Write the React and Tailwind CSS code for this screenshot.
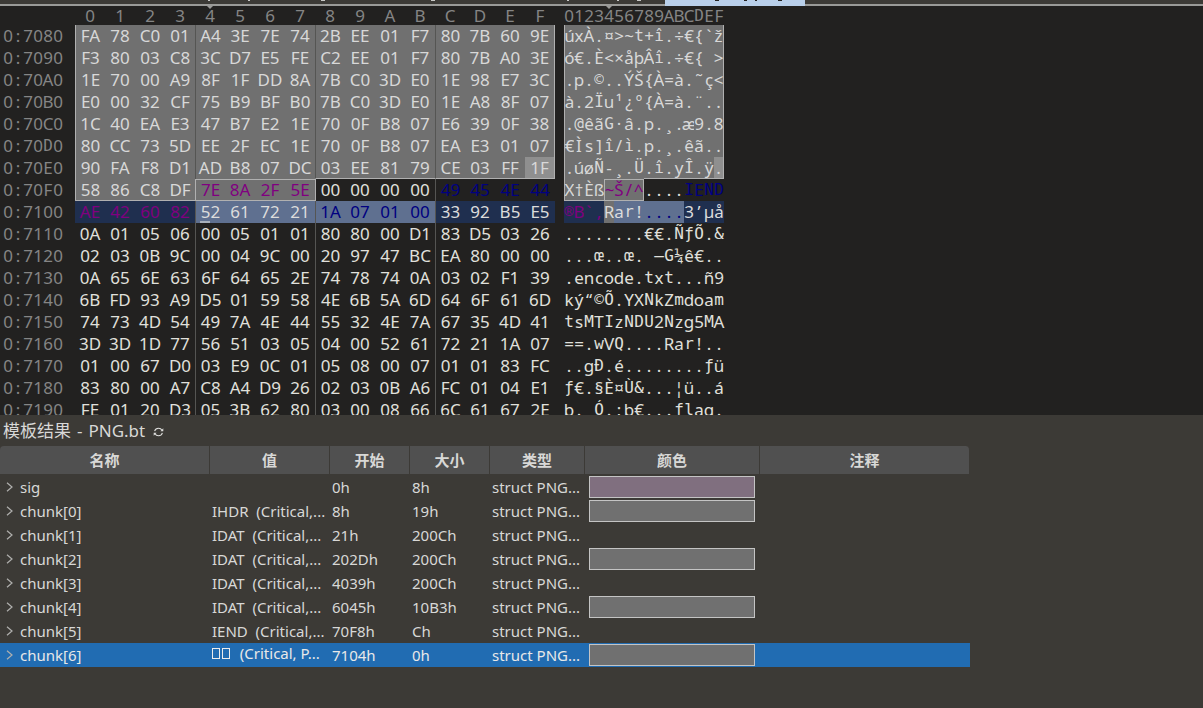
import React from "react";

const ROWS = [
  ["0:7080", "FA 78 C0 01 A4 3E 7E 74 2B EE 01 F7 80 7B 60 9E", "úxÀ.¤>~t+î.÷€{`ž"],
  ["0:7090", "F3 80 03 C8 3C D7 E5 FE C2 EE 01 F7 80 7B A0 3E", "ó€.È<×åþÂî.÷€{ >"],
  ["0:70A0", "1E 70 00 A9 8F 1F DD 8A 7B C0 3D E0 1E 98 E7 3C", ".p.©..ÝŠ{À=à.˜ç<"],
  ["0:70B0", "E0 00 32 CF 75 B9 BF B0 7B C0 3D E0 1E A8 8F 07", "à.2Ïu¹¿º{À=à.¨.."],
  ["0:70C0", "1C 40 EA E3 47 B7 E2 1E 70 0F B8 07 E6 39 0F 38", ".@êãG·â.p.¸.æ9.8"],
  ["0:70D0", "80 CC 73 5D EE 2F EC 1E 70 0F B8 07 EA E3 01 07", "€Ìs]î/ì.p.¸.êã.."],
  ["0:70E0", "90 FA F8 D1 AD B8 07 DC 03 EE 81 79 CE 03 FF 1F", ".úøÑ-¸.Ü.î.yÎ.ÿ."],
  ["0:70F0", "58 86 C8 DF 7E 8A 2F 5E 00 00 00 00 49 45 4E 44", "X†Èß~Š/^....IEND"],
  ["0:7100", "AE 42 60 82 52 61 72 21 1A 07 01 00 33 92 B5 E5", "®B`‚Rar!....3’µå"],
  ["0:7110", "0A 01 05 06 00 05 01 01 80 80 00 D1 83 D5 03 26", "........€€.ÑƒÕ.&"],
  ["0:7120", "02 03 0B 9C 00 04 9C 00 20 97 47 BC EA 80 00 00", "...œ..œ. —G¼ê€.."],
  ["0:7130", "0A 65 6E 63 6F 64 65 2E 74 78 74 0A 03 02 F1 39", ".encode.txt...ñ9"],
  ["0:7140", "6B FD 93 A9 D5 01 59 58 4E 6B 5A 6D 64 6F 61 6D", "ký“©Õ.YXNkZmdoam"],
  ["0:7150", "74 73 4D 54 49 7A 4E 44 55 32 4E 7A 67 35 4D 41", "tsMTIzNDU2Nzg5MA"],
  ["0:7160", "3D 3D 1D 77 56 51 03 05 04 00 52 61 72 21 1A 07", "==.wVQ....Rar!.."],
  ["0:7170", "01 00 67 D0 03 E9 0C 01 05 08 00 07 01 01 83 FC", "..gÐ.é........ƒü"],
  ["0:7180", "83 80 00 A7 C8 A4 D9 26 02 03 0B A6 FC 01 04 E1", "ƒ€.§È¤Ù&...¦ü..á"],
  ["0:7190", "FE 01 20 D3 05 3B 62 80 03 00 08 66 6C 61 67 2E", "þ. Ó.;b€...flag."],
];

const CHUNKS = [
  ["sig", "", "0h", "8h", "bg-[#806f7f]"],
  ["chunk[0]", "IHDR  (Critical,...", "8h", "19h", "bg-[#707070]"],
  ["chunk[1]", "IDAT  (Critical,...", "21h", "200Ch", null],
  ["chunk[2]", "IDAT  (Critical,...", "202Dh", "200Ch", "bg-[#707070]"],
  ["chunk[3]", "IDAT  (Critical,...", "4039h", "200Ch", null],
  ["chunk[4]", "IDAT  (Critical,...", "6045h", "10B3h", "bg-[#707070]"],
  ["chunk[5]", "IEND  (Critical,...", "70F8h", "Ch", null],
  ["chunk[6]", null, "7104h", "0h", "bg-[#707070]"],
];

const SANS = "font-['Noto_Sans','Noto_Sans_CJK_SC',sans-serif]";
const MONO = "font-['DejaVu_Sans_Mono',monospace] text-[16px]";
const MONO_GLYPHS = /[IMWilmwfrtjîÎìÏœ—¼@©®ƒNDUQGÑÕÓÐÙÜ&]/;

function Cells({ text, className = "", tone }) {
  return (
    <span className={`flex ${className}`}>
      {[...text].map((c, i) => (
        <span
          key={i}
          className={`flex w-[10px] justify-center whitespace-pre ${MONO_GLYPHS.test(c) ? MONO : ""} ${tone ? tone(i) : ""}`}
        >
          {c}
        </span>
      ))}
    </span>
  );
}

function textTone(row, i) {
  if (row < 7) return "text-[#d8d8d8]";
  if (row === 7) {
    if (i < 4) return "text-[#d8d8d8]";
    if (i < 8) return "text-[#800080]";
    return i < 12 ? "text-[#e0e0dc]" : "text-[#000080]";
  }
  if (row === 8) {
    if (i < 4) return "text-[#800080]";
    return i >= 8 && i < 12 ? "text-[#000080]" : "text-[#dcdcdc]";
  }
  return "text-[#e0e0dc]";
}

function fill(row, i, ascii) {
  if (row < 7) return row === 6 && i === 15 ? "bg-[#8f8f8f]" : "bg-[#707070]";
  if (row === 7) return i < 8 ? "bg-[#707070]" : "";
  if (row === 8) {
    if (i < 4 || i >= 12) return "bg-[#1f2f4f]";
    return ascii && i === 4 ? "bg-[#707070]" : "bg-[#5f7090]";
  }
  return "";
}

function edge(row, i, ascii) {
  const e = [];
  const line = "border-[#b0b0b0]";
  const divider = !ascii && (i === 4 || i === 8 || i === 12);
  if (row < 8 && i === 0) e.push("border-l", line);
  if (row < 7 && i === 15) e.push("border-r", line);
  if (row === 6 && i >= 8) e.push("border-b border-b-[#b0b0b0]");
  if (row === 7 && i < 8) e.push("border-b border-b-[#b0b0b0]");
  if (row === 7 && i >= 4 && i < 8) e.push("border-t border-t-[#b0b0b0]");
  if (row === 7 && i === 4) e.push("border-l", line);
  if (row === 7 && i === 7 && ascii) e.push("border-r", line);
  if (divider && !(row === 7 && i === 4)) {
    e.push("border-l", row === 7 && i === 8 ? "border-l-[#b0b0b0]" : "border-l-[#555553]");
  }
  return e.join(" ");
}

function HexView() {
  return (
    <section aria-label="Hex" className="flex flex-col bg-[#222120] text-[17px]">
      <div className="flex h-[18px] shrink-0 items-center leading-[18px] text-[#858585]">
        <div className="w-[75px] shrink-0" />
        <div className="flex w-[480px] shrink-0">
          {[..."0123456789ABCDEF"].map((c, i) => (
            <span key={c} className="relative w-[30px] text-center">
              {i === 4 && <Caret />}
              {c}
            </span>
          ))}
        </div>
        <div className="relative ml-[9px] shrink-0">
          <span className="absolute left-[40px] top-0 w-[10px]">
            <Caret />
          </span>
          <Cells text="0123456789ABCDEF" />
        </div>
      </div>
      <div className="h-[390px] overflow-hidden">
        {ROWS.map(([addr, bytes, ascii], r) => (
          <div key={addr} className="flex h-[22px] leading-[22px]">
            <Cells text={addr} className="ml-[3px] w-[72px] shrink-0 text-[#858585]" />
            <div className="flex w-[480px] shrink-0">
              {bytes.split(" ").map((b, i) => (
                <span
                  key={i}
                  className={`relative flex h-[22px] w-[30px] items-center justify-center ${textTone(r, i)} ${fill(r, i, false)} ${edge(r, i, false)}`}
                >
                  {b}
                  {r === 8 && i === 4 && <i className="absolute bottom-0 left-[4px] h-[2px] w-[10px] bg-[#a8b0bc]" />}
                </span>
              ))}
            </div>
            <Cells
              text={ascii}
              className="ml-[9px] shrink-0"
              tone={(i) => `h-[22px] items-center ${textTone(r, i)} ${fill(r, i, true)} ${edge(r, i, true)}`}
            />
          </div>
        ))}
      </div>
    </section>
  );
}

function Caret() {
  return (
    <svg viewBox="0 0 6 3" className="absolute -top-px left-1/2 h-[3px] w-[6px] -translate-x-1/2" fill="#9a9a98">
      <path d="M0 0h6L3 3z" />
    </svg>
  );
}

function Chevron() {
  return (
    <svg viewBox="0 0 8 10" className="h-[10px] w-[8px]" fill="none" stroke="#b0b0ae" strokeWidth="1.2">
      <path d="M1 .8 6 5 1 9.2" />
    </svg>
  );
}

function MissingGlyph() {
  return <span className="mr-[2px] inline-block h-[11px] w-[8px] border border-[#ececec]" />;
}

const HEADS = [
  ["名称", "w-[210px]"],
  ["值", "w-[120px]"],
  ["开始", "w-[80px]"],
  ["大小", "w-[80px]"],
  ["类型", "w-[95px]"],
  ["颜色", "w-[175px]"],
  ["注释", "w-[210px]"],
];

function Results() {
  return (
    <section className="flex-1 bg-[#3c3a36] text-[#d8d8d6]">
      <div className="flex h-[31px] items-center gap-[8px] pl-[3px] text-[17px]">
        <h2 className="flex gap-[6px]">
          <span>模板结果</span>
          <span>-</span>
          <span>PNG.bt</span>
        </h2>
        <button type="button" aria-label="Refresh" className="pt-[3px]">
          <svg viewBox="0 0 11 10" className="h-[10px] w-[11px]" fill="none" stroke="#dededc" strokeWidth="1.1">
            <path d="M1.6 4.2C2.2 2.4 3.8 1.3 5.5 1.3c1.5 0 2.8.7 3.5 1.9M9.4 5.8C8.8 7.6 7.2 8.7 5.5 8.7 4 8.7 2.7 8 2 6.8" />
            <path d="M10.3 1.2v3H7.4zM.7 8.8v-3h2.9z" fill="#dededc" stroke="none" />
          </svg>
        </button>
      </div>
      <table className="w-[970px] table-fixed border-separate border-spacing-0 text-[15px]">
        <thead>
          <tr className="h-[29px]">
            {HEADS.map(([h, w], i) => (
              <th
                key={h}
                scope="col"
                className={`${w} border-b border-r border-[#3c3a36] bg-[#505050] p-0 text-center font-bold ${i === 0 ? "rounded-tl-[4px]" : ""} ${i === 6 ? "rounded-tr-[4px]" : ""}`}
              >
                {h}
              </th>
            ))}
          </tr>
        </thead>
        <tbody>
          {CHUNKS.map(([name, value, start, size, swatch], i) => (
            <tr key={name} className={`h-[24px] leading-[24px] ${i === 7 ? "bg-[#216cb2] text-[#e8e8e8]" : ""}`}>
              <td className="p-0">
                <div className="flex items-center gap-[6px] pl-[6px]">
                  <button type="button" aria-label={`Expand ${name}`}>
                    <Chevron />
                  </button>
                  {name}
                </div>
              </td>
              <td className="whitespace-pre p-0 pl-[2px]">
                {value === null ? (
                  <div className="h-[24px] leading-[20px]">
                    <MissingGlyph />
                    <MissingGlyph />
                    {"  (Critical, P..."}
                  </div>
                ) : (
                  value
                )}
              </td>
              <td className="p-0 pl-[2px]">{start}</td>
              <td className="p-0 pl-[2px]">{size}</td>
              <td className="whitespace-nowrap p-0 pl-[2px]">struct PNG...</td>
              <td className="p-0 pl-[4px] pr-[5px]">
                {swatch && <div className={`h-[22px] border border-[#c4c4c4] ${swatch}`} />}
              </td>
              <td className="p-0" />
            </tr>
          ))}
        </tbody>
      </table>
    </section>
  );
}

function TabTails({ at, className }) {
  return (
    <svg className={`h-[2px] w-full ${className}`} fill="currentColor" aria-hidden="true">
      {at.map(([x, w]) => (
        <rect key={x} x={x} y="0" width={w} height="1" />
      ))}
    </svg>
  );
}

export default function App() {
  return (
    <main className={`flex min-h-screen flex-col overflow-hidden bg-[#3c3a36] ${SANS}`}>
      <div className="flex h-[7px] shrink-0 bg-[#222120]">
        <div className="h-[6px] w-[665px] border-b-2 border-[#9a9a98] bg-[#3c3a36]">
          <TabTails className="text-[#c8c8c6]" at={[[208, 2], [248, 2], [321, 4], [431, 4], [567, 2], [617, 2], [637, 4]]} />
        </div>
        <div className="h-[6px] w-[140px] bg-[#b9cfea]">
          <TabTails className="text-[#222120]" at={[[50, 4], [79, 3], [90, 2], [113, 4]]} />
        </div>
        <div className="h-[6px] flex-1 border-b-2 border-[#9a9a98] bg-[#3c3a36]" />
      </div>
      <HexView />
      <Results />
    </main>
  );
}
